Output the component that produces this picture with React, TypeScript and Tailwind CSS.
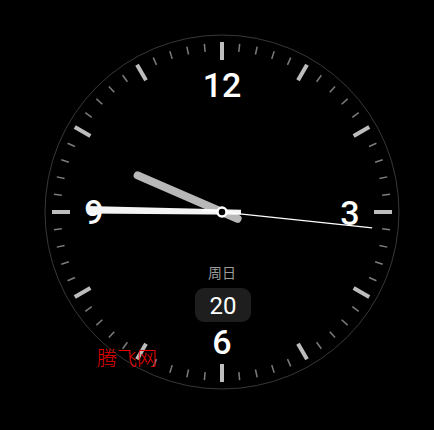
import React from 'react'

const CX = 222
const CY = 212

function polar(r: number, deg: number) {
  const a = ((deg - 90) * Math.PI) / 180
  return { x: CX + r * Math.cos(a), y: CY + r * Math.sin(a) }
}

function Ticks() {
  const items = []
  for (let i = 0; i < 60; i++) {
    const deg = i * 6
    const major = i % 5 === 0
    const a = polar(major ? 152 : 161, deg)
    const b = polar(major ? 170 : 169, deg)
    items.push(
      <line
        key={i}
        x1={a.x}
        y1={a.y}
        x2={b.x}
        y2={b.y}
        stroke={major ? '#bdbdbd' : '#7c7c7c'}
        strokeWidth={major ? 4 : 1.5}
      />
    )
  }
  return <g>{items}</g>
}

// tapered hand polygon, wide at the tip, narrower at the tail
function taper(deg: number, len: number, tail: number, wTip: number, wBase: number) {
  const a = ((deg - 90) * Math.PI) / 180
  const ux = Math.cos(a)
  const uy = Math.sin(a)
  const px = -uy
  const py = ux
  const tip = { x: CX + ux * len, y: CY + uy * len }
  const back = { x: CX - ux * tail, y: CY - uy * tail }
  const pts = [
    [tip.x + (px * wTip) / 2, tip.y + (py * wTip) / 2],
    [back.x + (px * wBase) / 2, back.y + (py * wBase) / 2],
    [back.x - (px * wBase) / 2, back.y - (py * wBase) / 2],
    [tip.x - (px * wTip) / 2, tip.y - (py * wTip) / 2],
  ]
  return pts.map((p) => p.join(',')).join(' ')
}

export default function App() {
  const hourDeg = 293.5
  const minDeg = 271
  const secDeg = 96

  const hTip = polar(92, hourDeg)
  const hTail = polar(-17, hourDeg)
  const sTip = polar(151, secDeg)
  const sTail = polar(-20, secDeg)

  return (
    <div className="relative flex h-[430px] w-[434px] bg-black">
      <svg width={434} height={430} viewBox="0 0 434 430" className="block">
        <circle cx={CX} cy={CY} r={177} fill="none" stroke="#383838" strokeWidth={1} />
        <Ticks />

        <g
          fill="#ffffff"
          fontSize={34}
          textAnchor="middle"
          className="font-['Roboto','Liberation_Sans',sans-serif] font-medium"
        >
          <text x={CX} y={97}>12</text>
          <text x={350} y={225}>3</text>
          <text x={CX} y={354}>6</text>
          <text x={94} y={224}>9</text>
        </g>

        <text
          x={CX}
          y={278}
          fill="#9a9a9a"
          fontSize={14}
          textAnchor="middle"
          className="font-['Noto_Sans_CJK_SC',sans-serif]"
        >
          周日
        </text>
        <rect x={195} y={288} width={56} height={34} rx={9} fill="#1e1e1e" />
        <text
          x={CX + 1}
          y={314}
          fill="#ffffff"
          fontSize={24}
          textAnchor="middle"
          className="font-['Roboto','Liberation_Sans',sans-serif]"
        >
          20
        </text>

        <line
          x1={hTail.x}
          y1={hTail.y}
          x2={hTip.x}
          y2={hTip.y}
          stroke="#b8b8b8"
          strokeWidth={8}
          strokeLinecap="round"
        />
        <polygon points={taper(minDeg, 135, 19, 7.5, 5)} fill="#f4f4f4" />
        <line x1={sTail.x} y1={sTail.y} x2={sTip.x} y2={sTip.y} stroke="#ffffff" strokeWidth={1.3} />
        <circle cx={CX} cy={CY} r={4.5} fill="#000" stroke="#ffffff" strokeWidth={2.5} />
      </svg>

      <div className="absolute left-[97px] top-[346px] font-['Noto_Sans_CJK_SC',sans-serif] text-[20px] font-light leading-[24px] text-[#e60000]">
        腾飞网
      </div>
    </div>
  )
}
